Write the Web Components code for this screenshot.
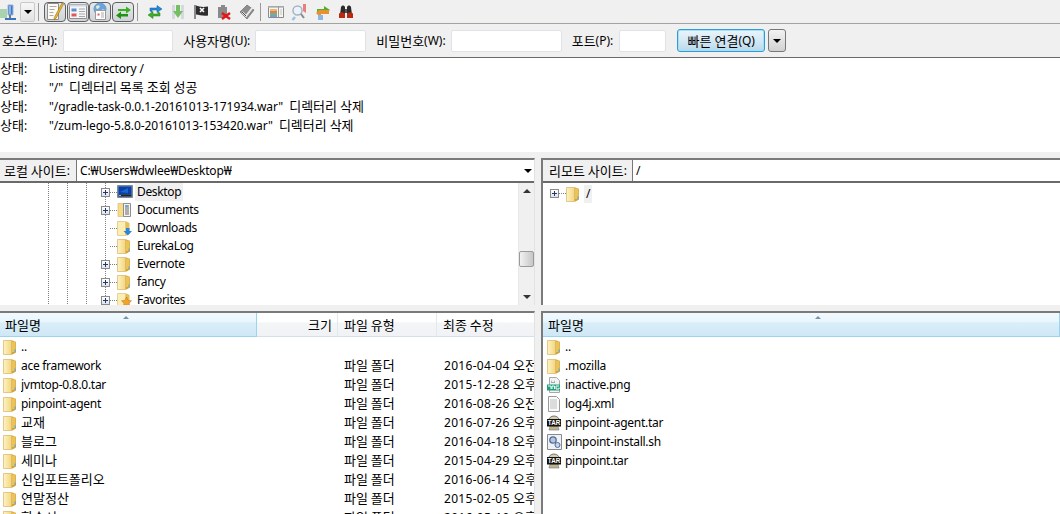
<!DOCTYPE html>
<html><head><meta charset="utf-8">
<style>
html,body{margin:0;height:514px;overflow:hidden;background:#f0f0f0;font:12px/16px "Noto Sans","Noto Sans CJK KR",sans-serif;color:#000}
</style></head><body>
<fz-app>
  <fz-toolbar>
    <fz-tool icon="site"></fz-tool><fz-tool kind="drop"></fz-tool><fz-sep l="3" r="5"></fz-sep>
    <fz-tool kind="on" icon="log"></fz-tool><fz-tool kind="on" icon="ltree"></fz-tool><fz-tool kind="on" icon="rtree"></fz-tool><fz-tool kind="on" icon="queue"></fz-tool><fz-sep l="3" r="5"></fz-sep>
    <fz-tool icon="refresh"></fz-tool><fz-tool icon="filter"></fz-tool><fz-tool icon="flag"></fz-tool><fz-tool icon="cancel"></fz-tool><fz-tool icon="check"></fz-tool><fz-sep l="2" r="3"></fz-sep>
    <fz-tool wide icon="compare"></fz-tool><fz-tool wide icon="search"></fz-tool><fz-tool wide icon="sync"></fz-tool><fz-tool wide icon="binoc"></fz-tool>
  </fz-toolbar>
  <fz-quick>
    <fz-field w="110" gap="6"><fz-k>호스트</fz-k>(H):</fz-field>
    <fz-field w="111" gap="5"><fz-k>사용자명</fz-k>(U):</fz-field>
    <fz-field w="111" gap="5"><fz-k>비밀번호</fz-k>(W):</fz-field>
    <fz-field w="47" gap="6" end="11"><fz-k>포트</fz-k>(P):</fz-field>
    <fz-connect><fz-k>빠른 연결</fz-k>(Q)</fz-connect>
    <fz-mini></fz-mini>
  </fz-quick>
  <fz-log>
    <fz-logline tight><fz-k>상태</fz-k>:<span slot="m">Listing directory /</span></fz-logline>
    <fz-logline><fz-k>상태</fz-k>:<span slot="m">"/" <fz-k sp>디렉터리 목록 조회 성공</fz-k></span></fz-logline>
    <fz-logline><fz-k>상태</fz-k>:<span slot="m">"/gradle-task-0.0.1-20161013-171934.war" <fz-k sp>디렉터리 삭제</fz-k></span></fz-logline>
    <fz-logline><fz-k>상태</fz-k>:<span slot="m">"/zum-lego-5.8.0-20161013-153420.war" <fz-k sp>디렉터리 삭제</fz-k></span></fz-logline>
  </fz-log>
  <fz-panes>
    <fz-pane side="l">
      <fz-sitebar combo w="77"><fz-k>로컬 사이트</fz-k>:<span slot="path">C:₩Users₩dwlee₩Desktop₩</span></fz-sitebar>
      <fz-treebox scroll>
        <fz-treerow guides="48,67,86,105" x="101" exp icon="desktop" sel>Desktop</fz-treerow>
        <fz-treerow guides="48,67,86,105" x="101" exp icon="docs">Documents</fz-treerow>
        <fz-treerow guides="48,67,86,105" x="101" icon="down">Downloads</fz-treerow>
        <fz-treerow guides="48,67,86,105" x="101" icon="folder">EurekaLog</fz-treerow>
        <fz-treerow guides="48,67,86,105" x="101" exp icon="folder">Evernote</fz-treerow>
        <fz-treerow guides="48,67,86,105" x="101" exp icon="folder">fancy</fz-treerow>
        <fz-treerow guides="48,67,86,105" x="101" exp icon="fav">Favorites</fz-treerow>
      </fz-treebox>
    </fz-pane>
    <fz-vgap></fz-vgap>
    <fz-pane side="r">
      <fz-sitebar w="90"><fz-k>리모트 사이트</fz-k>:<span slot="path">/</span></fz-sitebar>
      <fz-treebox>
        <fz-treerow root x="7" exp icon="folder" sel>/</fz-treerow>
      </fz-treebox>
    </fz-pane>
    <fz-hgap></fz-hgap><fz-hgap></fz-hgap><fz-hgap></fz-hgap>
    <fz-pane side="l">
      <fz-filelist cols="257,81,99,98">
        <fz-head active align="l" arrow="127"><fz-k>파일명</fz-k></fz-head><fz-head align="r"><fz-k>크기</fz-k></fz-head><fz-head><fz-k>파일 유형</fz-k></fz-head><fz-head><fz-k>최종 수정</fz-k></fz-head>
        <fz-file slot="rows" icon="folder">..</fz-file>
        <fz-file slot="rows" icon="folder" type="파일 폴더" date="2016-04-04 오전">ace framework</fz-file>
        <fz-file slot="rows" icon="folder" type="파일 폴더" date="2015-12-28 오후">jvmtop-0.8.0.tar</fz-file>
        <fz-file slot="rows" icon="folder" type="파일 폴더" date="2016-08-26 오전">pinpoint-agent</fz-file>
        <fz-file slot="rows" icon="folder" type="파일 폴더" date="2016-07-26 오후"><fz-k>교재</fz-k></fz-file>
        <fz-file slot="rows" icon="folder" type="파일 폴더" date="2016-04-18 오후"><fz-k>블로그</fz-k></fz-file>
        <fz-file slot="rows" icon="folder" type="파일 폴더" date="2015-04-29 오후"><fz-k>세미나</fz-k></fz-file>
        <fz-file slot="rows" icon="folder" type="파일 폴더" date="2016-06-14 오후"><fz-k>신입포트폴리오</fz-k></fz-file>
        <fz-file slot="rows" icon="folder" type="파일 폴더" date="2015-02-05 오후"><fz-k>연말정산</fz-k></fz-file>
        <fz-file slot="rows" icon="folder" type="파일 폴더" date="2016-05-10 오후"><fz-k>학습서</fz-k></fz-file>
      </fz-filelist>
    </fz-pane>
    <fz-vgap></fz-vgap>
    <fz-pane side="r">
      <fz-filelist cols="517">
        <fz-head active align="l" arrow="276"><fz-k>파일명</fz-k></fz-head>
        <fz-file slot="rows" remote icon="folder">..</fz-file>
        <fz-file slot="rows" remote icon="folder">.mozilla</fz-file>
        <fz-file slot="rows" remote icon="png">inactive.png</fz-file>
        <fz-file slot="rows" remote icon="xml">log4j.xml</fz-file>
        <fz-file slot="rows" remote icon="tar">pinpoint-agent.tar</fz-file>
        <fz-file slot="rows" remote icon="sh">pinpoint-install.sh</fz-file>
        <fz-file slot="rows" remote icon="tar">pinpoint.tar</fz-file>
      </fz-filelist>
    </fz-pane>
  </fz-panes>
</fz-app>
<script>
const ICONS={
folder:`<path d="M.5 1.500h9l3.500 1.500v10.500l-3.500 2H.5z" fill="#d3a33a"/><path d="M9 2.500h3.500v10.500H9z" fill="#eac35a"/><path d="M.5 1.500h8v14h-8z" fill="url(#fo)" stroke="#d8bb70" stroke-width=".6"/><path d="M11.500 10.500h1.200v2.500h-1.200z" fill="#5aa6d8"/><defs><linearGradient id="fo" x1="0" x2="1"><stop offset="0" stop-color="#fdf3c6"/><stop offset="1" stop-color="#f4d67c"/></linearGradient></defs>`,
desktop:`<path d="M.5 1.500h15v12H.5z" fill="#6f8fb4" stroke="#7d8b99"/><path d="M1.500 2.500h13v8h-13z" fill="#0c3fa8"/><path d="M1.500 10.500h13v2h-13z" fill="#222"/><path d="M2 11h2v1H2z" fill="#6ac1f0"/><path d="M3 8l8-4v5z" fill="#1c66d0"/>`,
docs:`<path d="M1 1.500h8v13H1z" fill="#f6dc87" stroke="#d6b45f" stroke-width=".6"/><path d="M6.500 1.500h7v13h-7z" fill="#f5f5f5" stroke="#8e8e8e"/><path d="M8 4h4M8 6h4M8 8h4M8 10h4M8 12h4" stroke="#666"/><path d="M8.500 3h2v2h-2z" fill="#5aa6d8"/>`,
down:`<path d="M.5 1.500h9l3 1.500v11l-3 1.500H.5z" fill="#e6c05c"/><path d="M.5 1.500h8v14H.5z" fill="#fbeeb4" stroke="#dcc078" stroke-width=".6"/><path d="M9 8h3.500v3H15l-4.200 4.500L6.500 11H9z" fill="#2a86d8"/>`,
fav:`<path d="M.5 1.500h9l3 1.500v11l-3 1.500H.5z" fill="#e3bd5a"/><path d="M.5 1.500h8v14H.5z" fill="#fbeeb4" stroke="#dcc078" stroke-width=".5"/><path d="M9.500 5l1.600 3.400 3.400.4-2.500 2.400.6 3.300-3.100-1.700-3.100 1.700.6-3.300L4.500 8.800l3.400-.4z" fill="#f0a52a" stroke="#c06a1a" stroke-width=".5"/>`,
png:`<path d="M2.500 .5h7l3 3v12h-10z" fill="#f2f2f2" stroke="#a8a8a8"/><path d="M4 3l1 2h2l1-2v3H4z" fill="#9aa"/><path d="M0 7.500h13v6H0z" fill="#1f9e7a"/><path d="M1 9h3v3M5 9v3m0-3h2.500v3M12 9H9v3h3v-1.500" stroke="#fff" fill="none"/>`,
xml:`<path d="M1.500 .5h8l3 3v12h-11z" fill="#fafafa" stroke="#9a9a9a"/><path d="M3 4h7M3 6h7M3 8h7M3 10h7M3 12h7" stroke="#bdbdbd"/>`,
tar:`<ellipse cx="7" cy="6" rx="5.500" ry="5" fill="#d5cfae" stroke="#777"/><path d="M3 11h8l1 4H2z" fill="#bcb48f" stroke="#777" stroke-width=".6"/><path d="M0 4h14v7.500H0z" fill="#111"/><text x="7" y="10.300" font-size="6.300" font-family="Liberation Sans" font-weight="700" fill="#fff" text-anchor="middle">TAR</text>`,
sh:`<path d="M.5 .5h14v15H.5z" fill="#eef2f8" stroke="#8a8a8a"/><circle cx="6" cy="6" r="3.200" fill="#b7c6dc" stroke="#53709a" stroke-width="1.300"/><circle cx="10.500" cy="11" r="2.500" fill="#c8d4e6" stroke="#53709a"/>`,
site:`<path d="M0 5h7v9H0z" fill="#a9d3ae"/><path d="M8 1h5v10H8z" fill="#3f78c8" stroke="#9eb6d8"/><path d="M9 2h2v8H9z" fill="#8ab4ea"/><path d="M10 11v3" stroke="#777" stroke-width="2"/><path d="M5 14h11v2H5z" fill="#3a72bd"/>`,
log:`<path d="M1.500 .5h11v16h-11z" fill="#fbfaf3" stroke="#8f8f8f"/><path d="M3.500 3.500h7M3.500 6.500h5M3.500 9.500h4M3.500 12.500h4" stroke="#aaa"/><path d="M16 0l1.500 1L10 15.500l-2 1.500.3-2.500z" fill="#efb828" stroke="#9b6d10" stroke-width=".6"/>`,
ltree:`<path d="M.5 1.500h17v14H.5z" fill="#f4f6f8" stroke="#8f8f8f"/><path d="M.5 1.500h17v2H.5z" fill="#cfd8e3"/><path d="M2.500 5.500h5v3h-5z" fill="#5a8fd0"/><path d="M2.500 10.500h5v3h-5z" fill="#e05858"/><path d="M10 6h6M10 8.500h6M10 11h6M10 13.500h6" stroke="#a8a8a8"/>`,
rtree:`<circle cx="9" cy="6" r="6" fill="#6aa4dd" stroke="#6e97c2"/><path d="M5 3c3-2 5 0 3 2S5 6 5 3zm6 3l3 1-2 2z" fill="#d9ecd2"/><path d="M4.500 7.500h10v9h-10z" fill="#fff" stroke="#9a9a9a"/><path d="M6.500 10.500h2v2h-2z" fill="#e05858"/><path d="M10 10h3M10 12h3M10 14h3" stroke="#aaa"/>`,
queue:`<path d="M4 6h8V3.500l5 3.500-5 3.500V8H4z" fill="#3ab01e"/><path d="M14 11H7V8.500L2 12.500l5 3.500v-2.500h7z" fill="#1f9412"/>`,
refresh:`<path d="M3 7V4h7V1.500L15 5l-5 3.500V6H5v2z" fill="#2388d8" stroke="#125a9e" stroke-width=".5"/><path d="M13 9v3H6v2.500L1 11l5-3.500V10h5V8z" fill="#3fae2a" stroke="#207c14" stroke-width=".5"/>`,
filter:`<path d="M2 1h3v14H2zM11 1h3v14h-3z" fill="#d5d8de"/><path d="M6 1h4v6h3l-5 7-5-7h3z" fill="#74bf62"/>`,
flag:`<path d="M2 1v14" stroke="#6a6a6a" stroke-width="1.500"/><path d="M3 1.500c3 1 6 2 12 1v9c-5 1-9-1-12-1z" fill="#2e2e2e"/><path d="M7 4l4 4m0-4L7 8" stroke="#fff" stroke-width="1.600"/>`,
cancel:`<path d="M5 1h4v2h2v11H2V3h3z" fill="#8a8a8a"/><path d="M6 9l8 6m0-6l-8 6" stroke="#e01818" stroke-width="2.400"/>`,
check:`<path d="M1 8l7-7 7 5-7 9z" fill="#8d8d8d" stroke="#5e5e5e" stroke-width=".6"/><path d="M3 8l4 4 7-9" stroke="#e9e9e9" stroke-width="2" fill="none"/><path d="M3 8l4 4" stroke="#555" fill="none"/>`,
compare:`<path d="M.5 2.500h15v11H.5z" fill="#f5f5f5" stroke="#8a8a8a"/><path d="M.5 2.500h15v1.500H.5z" fill="#bcc6d4"/><path d="M2 6h7" stroke="#e8a820" stroke-width="1.500"/><path d="M2 8h7" stroke="#e34a4a" stroke-width="1.500"/><path d="M2 10h7" stroke="#3ea83e" stroke-width="1.500"/><path d="M2 12h7" stroke="#4a7fd0" stroke-width="1.500"/><path d="M10.500 2.500v11" stroke="#999"/><path d="M12 6h2M12 8h2M12 10h2" stroke="#c9c9a0"/>`,
search:`<path d="M12 0h3v9l-3-2z" fill="#e87f7f"/><circle cx="6.500" cy="6.500" r="4.500" fill="#eaf3fb" stroke="#a8b4c2" stroke-width="1.500"/><path d="M4 13l-2.500 3" stroke="#9dc0e6" stroke-width="2.500"/><path d="M10 10l3 4" stroke="#8a8a8a" stroke-width="2"/>`,
sync:`<path d="M2 5h7V2l6 4-4 3H2z" fill="#54ad32"/><path d="M14 7v3H6v2H4L1 9l3-3h10z" fill="#e9912c"/><path d="M3 11h5v5H3z" fill="#8ab8e6"/>`,
binoc:`<path d="M3 3c1-2 3-2 4 0v8H2z" fill="#2b2b2b"/><path d="M9 3c1-2 3-2 4 0l1 8H9z" fill="#2b2b2b"/><path d="M1 10c0-2 6-2 6 0v4H1zM9 10c0-2 6-2 6 0v4H9z" fill="#b82a10"/><path d="M7 5h2v4H7z" fill="#555"/>`
};
let fid=0;
function def(name,css,html){
  customElements.define(name,class extends HTMLElement{
    constructor(){super();const s=this.attachShadow({mode:"open"});s.innerHTML=`<style>${css}</style>${typeof html=="function"?"":html}`;}
    connectedCallback(){if(typeof html=="function"&&!this._d){this._d=1;this.shadowRoot.innerHTML+=html(this);}}
  });
}
const icon=(t,w=16,h=16)=>{fid++;const b=(ICONS[t]||"").replace(/"fo"/g,`"fo${fid}"`).replace(/#fo\)/g,`#fo${fid})`);return `<svg width="${w}" height="${h}" viewBox="0 0 ${w} ${h}" style="display:block;flex:none;overflow:visible">${b}</svg>`};

def("fz-k",":host{display:inline;font-family:'Noto Sans CJK KR',sans-serif;font-size:13px;letter-spacing:0}:host([sp]){margin-left:3px}","<slot></slot>");
def("fz-app",":host{display:flex;flex-direction:column;width:1060px;height:514px;overflow:hidden}","<slot></slot>");
def("fz-toolbar",":host{display:flex;align-items:center;height:23px;box-sizing:content-box;border-bottom:1px solid #a3a3a3;background:#f0f0f0}","<slot></slot>");
def("fz-sep",":host{display:block;flex:none;width:1px;height:18px;background:#9a9a9a}",h=>{h.style.margin=`0 ${h.getAttribute("r")}px 0 ${h.getAttribute("l")}px`;return ""});
def("fz-tool",`:host{display:flex;flex:none;align-items:center;justify-content:center;width:23px;height:22px;box-sizing:border-box}
:host([wide]){width:23.5px}
:host([kind=on]){width:22px;height:20px;margin-right:.5px;border:1px solid #5f5f5f;border-radius:4px;background:linear-gradient(#e6e9ec,#cfd3d8)}
:host([icon=site]){width:18px;justify-content:flex-start;margin-right:2px}
:host([kind=drop]){width:15px;height:20px;border:1px solid #c9c9c9;border-radius:2px;background:linear-gradient(#f7f7f7,#e2e2e2)}
i{width:0;height:0;border:4px solid transparent;border-top:4px solid #000;border-bottom:0}`,
h=>h.getAttribute("kind")=="drop"?"<i></i>":icon(h.getAttribute("icon"),h.getAttribute("kind")=="on"?18:16,h.getAttribute("kind")=="on"?18:16));
def("fz-quick",":host{display:flex;align-items:center;height:33px;box-sizing:content-box;padding:0 0 0 2px;border-bottom:1px solid #6b6b6b;background:#f0f0f0}","<slot></slot>");
def("fz-field",`:host{display:flex;align-items:center;margin-right:10px;white-space:nowrap}
:host([end]){margin-right:11px}
b{display:block;height:22px;box-sizing:border-box;background:#fff;border:1px solid #dfe3e8;border-radius:2px;font-weight:400}`,
h=>`<slot></slot><b style="width:${h.getAttribute("w")}px;margin-left:${h.getAttribute("gap")}px"></b>`);
def("fz-connect",`:host{display:flex;align-items:center;justify-content:center;box-sizing:border-box;width:88px;height:23px;border:1px solid #2f9cd8;border-radius:3px;background:linear-gradient(#e9f4fb 0,#d5e9f5 50%,#b9d8ea 100%);box-shadow:inset 0 0 0 1px #a5e0f5;white-space:nowrap}`,"<slot></slot>");
def("fz-mini",`:host{display:flex;align-items:center;justify-content:center;box-sizing:border-box;width:18px;height:23px;margin-left:3px;border:1px solid #777;border-radius:3px;background:linear-gradient(#f2f2f2,#d2d2d2)}
i{width:0;height:0;border:4px solid transparent;border-top:4px solid #000;border-bottom:0}`,"<i></i>");
def("fz-log",":host{display:block;height:94px;background:#fff;padding-top:1px;box-sizing:border-box;letter-spacing:-.07px}","<slot></slot>");
def("fz-logline",":host{display:flex;height:19px;align-items:center;white-space:nowrap}:host([tight]){letter-spacing:-.2px}div{width:49px;flex:none}","<div><slot></slot></div><slot name='m'></slot>");
def("fz-panes",":host{display:grid;grid-template-columns:535px 6px 519px;grid-template-rows:147px 6px 203px;margin-top:6px;box-shadow:0 -6px 0 #f0f0f0, 0 -5px 0 #dfdfdf}","<slot></slot>");
def("fz-vgap",":host{display:block}","");
def("fz-hgap",":host{display:block}","");
def("fz-pane",`:host{display:flex;flex-direction:column;min-height:0;overflow:hidden;background:#fff;border-top:2px solid #7a7a7a;box-sizing:border-box}
:host([side=l]){border-right:1px solid #e2e2e2}:host([side=r]){border-left:2px solid #7a7a7a;border-right:0}`,"<slot></slot>");
def("fz-sitebar",`:host{display:flex;flex:none;height:23px;box-sizing:border-box;background:#fff;border-bottom:2px solid #6a6a6a;white-space:nowrap;align-items:stretch;letter-spacing:-.15px}
.l{display:flex;align-items:center;box-sizing:border-box;background:#f0f0f0;border-right:1px solid #777;padding-left:4px}
:host([w="90"]) .l{padding-left:6px}
.p{display:flex;align-items:center;flex:1;padding-left:3px}
i{align-self:center;width:0;height:0;border:4px solid transparent;border-top:4px solid #000;border-bottom:0;margin-right:2px}`,
h=>`<div class="l" style="width:${h.getAttribute("w")}px"><slot></slot></div><div class="p"><slot name="path"></slot></div>${h.hasAttribute("combo")?"<i></i>":""}`);
def("fz-treebox",`:host{display:block;flex:1;min-height:0;position:relative;overflow:hidden}
.s{position:absolute;right:0;top:0;bottom:0;width:16px;background:#f0f0f0;border-left:1px solid #e8e8e8;box-sizing:border-box}
.u,.d{position:absolute;left:4px;width:0;height:0;border:4px solid transparent}
.u{top:6px;border-bottom:4px solid #333;border-top:0}.d{bottom:6px;border-top:4px solid #333;border-bottom:0}
.t{position:absolute;left:0;right:0;top:68px;height:16px;box-sizing:border-box;border:1px solid #9a9a9a;border-radius:2px;background:linear-gradient(90deg,#f2f2f2,#c6c6c6)}`,
h=>`<slot></slot>${h.hasAttribute("scroll")?'<div class="s"><i class="u"></i><div class="t"></div><i class="d"></i></div>':""}`);
def("fz-treerow",`:host{display:flex;align-items:center;height:18px;white-space:nowrap;position:relative;letter-spacing:-.33px}
:host([root]){height:19px;margin-top:1px}
.x{flex:none;width:9px;height:9px;box-sizing:border-box;border:1px solid #8a8a8a;background:linear-gradient(#fff,#dfe3ea);position:relative;z-index:1}
.x:before{content:"";position:absolute;left:1px;right:1px;top:3px;height:1px;background:#22386a}
.x:after{content:"";position:absolute;top:1px;bottom:1px;left:3px;width:1px;background:#22386a}
.o{flex:none;width:9px}
.c{flex:none;width:7px;height:1px;background:repeating-linear-gradient(90deg,#808080 0 1px,transparent 1px 2px)}
.n{padding:0 2px;line-height:18px;height:18px;margin-left:2px}
.g{position:absolute;top:0;bottom:0;width:1px;background:repeating-linear-gradient(#808080 0 1px,transparent 1px 2px)}
:host([sel]) .n{background:#f0f0f0}`,
h=>{const x=+h.getAttribute("x"),g=(h.getAttribute("guides")||"").split(",").filter(Boolean);
return g.map(v=>`<i class="g" style="left:${v}px"></i>`).join("")+`<div style="width:${x}px;flex:none"></div>${h.hasAttribute("exp")?'<div class="x"></div>':'<div class="o"></div>'}<div class="c"></div>${icon(h.getAttribute("icon"))}<div class="n"><slot></slot></div>`});
def("fz-filelist",`:host{display:block;height:100%;overflow:hidden}
.h{display:grid;height:24px}
.r{overflow:hidden}`,
h=>`<div class="h" style="grid-template-columns:${h.getAttribute("cols").split(",").map(v=>v+"px").join(" ")}"><slot></slot></div><div class="r"><slot name="rows"></slot></div>`);
def("fz-head",`:host{display:flex;align-items:center;box-sizing:border-box;height:24px;padding:0 5px;position:relative;white-space:nowrap;background:linear-gradient(#fff 0,#fff 40%,#f3f5f7 42%,#f0f2f5 100%);border-right:1px solid #e3e8ee;border-bottom:1px solid #d5dfe8}
:host([align=r]){justify-content:flex-end}
:host(:not([align])){padding-left:6px}
:host([active]){padding-left:5px;background:linear-gradient(#f0f9fe 0,#eaf6fc 40%,#d9eef9 42%,#cfe8f6 100%);border-right:1px solid #9bd4f2;border-bottom:1px solid #9bd4f2}
i{position:absolute;top:3px;width:0;height:0;border:3.5px solid transparent;border-bottom:3px solid #7d92a6;border-top:0}`,
h=>`<slot></slot>${h.hasAttribute("arrow")?`<i style="left:${+h.getAttribute("arrow")-4}px"></i>`:""}`);
def("fz-file",`:host{display:flex;align-items:center;height:19px;white-space:nowrap;overflow:hidden;padding-left:3px}
:host([remote]){padding-left:4px}
.n{width:238px;flex:none;margin-left:4px;overflow:hidden;letter-spacing:-.28px}
.t{width:100px;flex:none}
.d{width:91px;flex:none;overflow:hidden;letter-spacing:.3px}`,
h=>{const T=h.getAttribute("type"),D=h.getAttribute("date");let extra="";
 if(T){const m=D.split(" ");extra=`<div style="width:85px;flex:none"></div><div class="t"><fz-k>${T}</fz-k></div><div class="d">${m[0]} <fz-k>${m[1]}</fz-k></div>`}
 return icon(h.getAttribute("icon"),14,16)+`<div class="n"><slot></slot></div>`+extra});
</script>
</body></html>
